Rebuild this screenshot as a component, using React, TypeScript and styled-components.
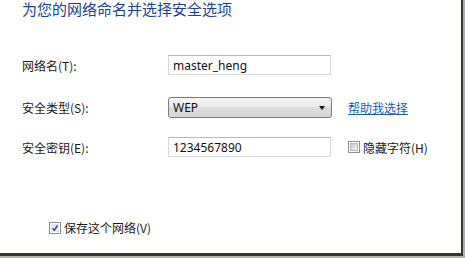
import React from "react";
import styled, { createGlobalStyle } from "styled-components";

const Global = createGlobalStyle`
  html, body { margin: 0; padding: 0; background: #b3b0a4; }
  body { width: 465px; height: 258px; overflow: hidden; }
`;

const Shadow = styled.div`
  width: 465px;
  height: 258px;
  background: #b3b0a4;
`;

const Panel = styled.div`
  box-sizing: border-box;
  width: 463px;
  height: 256px;
  background: #fff;
  border-right: 2px solid #36362e;
  border-bottom: 3px solid #36362e;
  font-family: "Noto Sans", "Noto Sans CJK SC", sans-serif;
  font-size: 12px;
  color: #1a1a1a;
  display: flex;
  flex-direction: column;
`;

const Title = styled.div`
  margin: 0 0 0 22px;
  font-family: "Noto Sans CJK SC", sans-serif;
  font-size: 15px;
  line-height: 18px;
  color: #1d3f98;
`;

const Form = styled.div`
  display: flex;
  flex-direction: column;
  padding-left: 22px;
`;

const Row = styled.div<{ $top: number }>`
  display: flex;
  align-items: center;
  height: 20px;
  margin-top: ${(p) => p.$top}px;
`;

const Label = styled.div`
  width: 146px;
  font-family: "Noto Sans CJK SC", sans-serif;
  font-size: 12px;
  color: #1a1a1a;
`;

const TextBox = styled.div`
  box-sizing: border-box;
  width: 163px;
  height: 20px;
  border: 1px solid #d6d9dd;
  border-top-color: #b6b9be;
  padding-left: 4px;
  display: flex;
  align-items: center;
  font-family: "Noto Sans", sans-serif;
  font-size: 12px;
  color: #111;
`;

const Select = styled.div`
  box-sizing: border-box;
  width: 164px;
  height: 21px;
  border: 1px solid #7a7a7a;
  border-radius: 3px;
  background: linear-gradient(#f4f4f4 0%, #ececec 45%, #dcdcdc 50%, #d6d6d6 100%);
  padding: 0 6px 0 4px;
  display: flex;
  align-items: center;
  justify-content: space-between;
  font-family: "Noto Sans", sans-serif;
  font-size: 12px;
  color: #111;
`;

const Arrow = styled.span`
  width: 0;
  height: 0;
  border-left: 3.5px solid transparent;
  border-right: 3.5px solid transparent;
  border-top: 4px solid #111;
  margin-top: 2px;
`;

const Link = styled.a`
  margin-left: 16px;
  font-family: "Noto Sans CJK SC", sans-serif;
  font-size: 12px;
  color: #1a5bb8;
  text-decoration: underline;
`;

const CheckRow = styled.label<{ $left?: number; $top?: number }>`
  display: flex;
  align-items: center;
  gap: 3px;
  margin-left: ${(p) => p.$left ?? 0}px;
  margin-top: ${(p) => p.$top ?? 0}px;
  font-family: "Noto Sans CJK SC", sans-serif;
  font-size: 12px;
  color: #1a1a1a;
`;

const Box = styled.span`
  box-sizing: border-box;
  width: 12px;
  height: 12px;
  border: 1px solid #8e8f8f;
  background: #fff;
  display: flex;
  align-items: center;
  justify-content: center;
  padding: 1px;
`;

const BoxInner = styled.span`
  box-sizing: border-box;
  width: 8px;
  height: 8px;
  background: linear-gradient(135deg, #c9c9c9, #f2f2f2);
  border: 1px solid #b8b8b8;
`;

const CheckSvg = styled.svg`
  width: 10px;
  height: 10px;
  display: block;
`;

function Checkbox({ checked }: { checked?: boolean }) {
  return (
    <Box>
      {checked ? (
        <CheckSvg viewBox="0 0 10 10">
          <rect x="0" y="0" width="10" height="10" fill="#e4e8f0" />
          <path d="M2 5.2 L4.2 7.8 L8.2 1.6" fill="none" stroke="#2f4a8a" strokeWidth="1.8" />
        </CheckSvg>
      ) : (
        <BoxInner />
      )}
    </Box>
  );
}

export default function App() {
  return (
    <>
      <Global />
      <Shadow>
        <Panel>
          <Title>为您的网络命名并选择安全选项</Title>
          <Form>
            <Row $top={37}>
              <Label>网络名(T):</Label>
              <TextBox>master_heng</TextBox>
            </Row>
            <Row $top={22}>
              <Label>安全类型(S):</Label>
              <Select>
                WEP
                <Arrow />
              </Select>
              <Link>帮助我选择</Link>
            </Row>
            <Row $top={20}>
              <Label>安全密钥(E):</Label>
              <TextBox>1234567890</TextBox>
              <CheckRow $left={17}>
                <Checkbox />
                隐藏字符(H)
              </CheckRow>
            </Row>
            <CheckRow $left={27} $top={62}>
              <Checkbox checked />
              保存这个网络(V)
            </CheckRow>
          </Form>
        </Panel>
      </Shadow>
    </>
  );
}
